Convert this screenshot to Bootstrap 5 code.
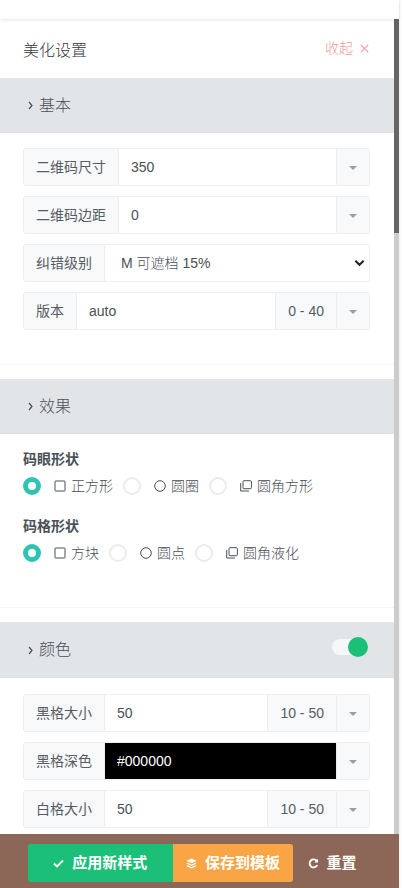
<!DOCTYPE html>
<html lang="zh">
<head>
<meta charset="utf-8">
<title>美化设置</title>
<link rel="stylesheet" href="https://cdn.jsdelivr.net/npm/bootstrap@5.3.0/dist/css/bootstrap.min.css">
<style>
html,body{height:100%;overflow:hidden;margin:0}
body{font-family:"Liberation Sans","Noto Sans CJK SC",sans-serif;font-size:14px;font-weight:300;color:#495057;background:#fff}
.app-frame{height:888px;width:399px;display:flex;flex-direction:column;position:relative;box-shadow:0 0 3px rgba(0,0,0,.12)}
.top-strip{height:19px;flex:none;background:#fff;box-shadow:0 1px 3px rgba(0,0,0,.1);position:relative;z-index:2}
.scroll-row{flex:1;min-height:0;display:flex;overflow:hidden}
.panel-body{flex:1;min-width:0;overflow:hidden}
.fake-track{width:5px;flex:none;background:#ccc}
.fake-thumb{height:214px;background:#666}
.panel-head{height:59px;padding:5px 25px 0 23px}
.panel-title{font-size:16px;color:#343a40}
.panel-close{font-size:14px;color:#f09a9a;margin-bottom:5px;gap:7px}
.sect-head{background:#e2e5e8;color:#495057;font-size:16px;height:55px;padding:1px 26px 0 28px;border-bottom:1px solid #dee2e6}
.sect-tall{height:56px}
.sect-head svg{margin-right:6px}
.sect-body{padding:15px 24px 24px 23px;border-bottom:1px solid #f3f4f5;margin-bottom:14px}
.sect-body-colors{padding-top:16px}
.qr-group{height:38px;margin-bottom:10px;flex-wrap:nowrap}
.qr-group .input-group-text{background:#f8f9fa;border-color:#eceef0;color:#555c63;font-size:14px;padding:0 12px;border-radius:3px}
.qr-group .form-control,.qr-group .form-select{border-color:#eceef0;color:#495057;font-size:14px;font-weight:300;box-shadow:none;border-radius:3px}
.qr-group .form-control{padding:0 12px}
.qr-group .form-select{padding-left:16px;background-image:url("data:image/svg+xml,%3csvg xmlns='http://www.w3.org/2000/svg' viewBox='0 0 12 8'%3e%3cpath fill='none' stroke='%23212529' stroke-width='2.2' d='M1.5 1.5L6 6l4.5-4.5'/%3e%3c/svg%3e");background-position:right 4px center;background-size:11px 8px}
.qr-drop{width:34px;flex:none;justify-content:center}
.qr-caret{width:0;height:0;border-left:4px solid transparent;border-right:4px solid transparent;border-top:4px solid #9a9fa5;margin-top:1px}
.qr-group .qr-dark{background:#000;color:#fff}
.opt-label{font-size:14px;font-weight:700;color:#495057;line-height:20px;margin-bottom:7px}
.opt-row{height:20px;margin-bottom:20px;font-size:14px}
.opt-item{display:flex;align-items:center}
.opt-dot{width:18px;height:18px;border-radius:50%;border:2px solid #ececec;background:#fff;flex:none;margin-right:13px}
.opt-dot.is-on{border:5.5px solid #2fc4b2}
.opt-item svg{margin-right:5px;flex:none}
.opt-item .opt-text{margin-right:10px}
.switch-track{width:36px;height:16px;background:#f6f7f8;border-radius:8px;position:relative;margin-bottom:6px}
.switch-knob{width:20px;height:20px;border-radius:50%;background:#1bbf78;position:absolute;right:0;top:-2px}
.action-bar{position:absolute;left:0;right:0;bottom:0;height:54px;background:#8c6656;padding:10px 28px 0;align-items:flex-start}
.act-btn{height:38px;border:0;border-radius:3px;color:#fff;font-size:15px;font-weight:700;padding:0;display:flex;align-items:center;justify-content:center;gap:8px}
.act-green{background:#1bbf78;width:145px;border-radius:3px 0 0 3px}
.act-orange{background:#f9a545;width:121px;border-radius:0 3px 3px 0}
.act-plain{background:transparent;width:78px}
</style>
</head>
<body>
<div class="app-frame">
  <div class="top-strip"></div>
  <div class="scroll-row">
    <div class="panel-body">
      <div class="panel-head d-flex justify-content-between align-items-center">
        <span class="panel-title">美化设置</span>
        <span class="panel-close d-flex align-items-center">收起<svg width="9" height="9" viewBox="0 0 9 9"><path d="M.8.8l7.4 7.4M8.2.8L.8 8.2" fill="none" stroke="#f09a9a" stroke-width="1.1"/></svg></span>
      </div>

      <div class="sect-head d-flex align-items-center">
        <svg width="5" height="9" viewBox="0 0 5 9"><path d="M1 1l3 3.5L1 8" fill="none" stroke="#495057" stroke-width="1.2"/></svg>基本
      </div>
      <div class="sect-body">
        <div class="input-group qr-group">
          <span class="input-group-text">二维码尺寸</span>
          <input class="form-control" value="350">
          <span class="input-group-text qr-drop"><i class="qr-caret"></i></span>
        </div>
        <div class="input-group qr-group">
          <span class="input-group-text">二维码边距</span>
          <input class="form-control" value="0">
          <span class="input-group-text qr-drop"><i class="qr-caret"></i></span>
        </div>
        <div class="input-group qr-group">
          <span class="input-group-text">纠错级别</span>
          <select class="form-select"><option>M 可遮档 15%</option></select>
        </div>
        <div class="input-group qr-group">
          <span class="input-group-text">版本</span>
          <input class="form-control" value="auto">
          <span class="input-group-text">0 - 40</span>
          <span class="input-group-text qr-drop"><i class="qr-caret"></i></span>
        </div>
      </div>

      <div class="sect-head d-flex align-items-center">
        <svg width="5" height="9" viewBox="0 0 5 9"><path d="M1 1l3 3.5L1 8" fill="none" stroke="#495057" stroke-width="1.2"/></svg>效果
      </div>
      <div class="sect-body">
        <div class="opt-label">码眼形状</div>
        <div class="opt-row d-flex align-items-center">
          <div class="opt-item"><span class="opt-dot is-on"></span><svg width="12" height="12" viewBox="0 0 12 12"><rect x="1" y="1" width="10" height="10" rx=".6" fill="none" stroke="#495057"/></svg><span class="opt-text">正方形</span></div>
          <div class="opt-item"><span class="opt-dot"></span><svg width="12" height="12" viewBox="0 0 12 12"><circle cx="6" cy="6" r="5.3" fill="none" stroke="#495057"/></svg><span class="opt-text">圆圈</span></div>
          <div class="opt-item"><span class="opt-dot"></span><svg width="12" height="12" viewBox="0 0 12 12"><rect x="3" y=".7" width="8.4" height="8" rx="1" fill="none" stroke="#495057"/><path d="M.7 3v8h8.3" fill="none" stroke="#495057"/></svg><span class="opt-text">圆角方形</span></div>
        </div>
        <div class="opt-label">码格形状</div>
        <div class="opt-row d-flex align-items-center">
          <div class="opt-item"><span class="opt-dot is-on"></span><svg width="12" height="12" viewBox="0 0 12 12"><rect x="1" y="1" width="10" height="10" rx=".6" fill="none" stroke="#495057"/></svg><span class="opt-text">方块</span></div>
          <div class="opt-item"><span class="opt-dot"></span><svg width="12" height="12" viewBox="0 0 12 12"><circle cx="6" cy="6" r="5.3" fill="none" stroke="#495057"/></svg><span class="opt-text">圆点</span></div>
          <div class="opt-item"><span class="opt-dot"></span><svg width="12" height="12" viewBox="0 0 12 12"><rect x="3" y=".7" width="8.4" height="8" rx="1" fill="none" stroke="#495057"/><path d="M.7 3v8h8.3" fill="none" stroke="#495057"/></svg><span class="opt-text">圆角液化</span></div>
        </div>
      </div>

      <div class="sect-head sect-tall d-flex align-items-center justify-content-between">
        <span class="d-flex align-items-center"><svg width="5" height="9" viewBox="0 0 5 9"><path d="M1 1l3 3.5L1 8" fill="none" stroke="#495057" stroke-width="1.2"/></svg>颜色</span>
        <span class="switch-track"><span class="switch-knob"></span></span>
      </div>
      <div class="sect-body sect-body-colors">
        <div class="input-group qr-group">
          <span class="input-group-text">黑格大小</span>
          <input class="form-control" value="50">
          <span class="input-group-text">10 - 50</span>
          <span class="input-group-text qr-drop"><i class="qr-caret"></i></span>
        </div>
        <div class="input-group qr-group">
          <span class="input-group-text">黑格深色</span>
          <input class="form-control qr-dark" value="#000000">
          <span class="input-group-text qr-drop"><i class="qr-caret"></i></span>
        </div>
        <div class="input-group qr-group">
          <span class="input-group-text">白格大小</span>
          <input class="form-control" value="50">
          <span class="input-group-text">10 - 50</span>
          <span class="input-group-text qr-drop"><i class="qr-caret"></i></span>
        </div>
      </div>
    </div>
    <div class="fake-track"><div class="fake-thumb"></div></div>
  </div>
  <div class="action-bar d-flex">
    <button class="act-btn act-green"><svg width="11" height="9" viewBox="0 0 11 9"><path d="M1 4.5l3 3 6-6" fill="none" stroke="#fff" stroke-width="1.8"/></svg>应用新样式</button>
    <button class="act-btn act-orange"><svg width="11" height="11" viewBox="0 0 12 11"><path d="M6 0l5.5 2.6L6 5.2.5 2.6z" fill="#fff"/><path d="M1 5l5 2.4L11 5M1 7.8l5 2.4 5-2.4" fill="none" stroke="#fff" stroke-width="1.4"/></svg>保存到模板</button>
    <button class="act-btn act-plain"><svg width="11" height="11" viewBox="0 0 11 11"><path d="M9 3.2A4 4 0 1 0 9.3 7" fill="none" stroke="#fff" stroke-width="1.8"/><path d="M10 .8v3.6H6.4z" fill="#fff"/></svg>重置</button>
  </div>
</div>
<script src="https://cdn.jsdelivr.net/npm/bootstrap@5.3.0/dist/js/bootstrap.bundle.min.js"></script>
</body>
</html>
